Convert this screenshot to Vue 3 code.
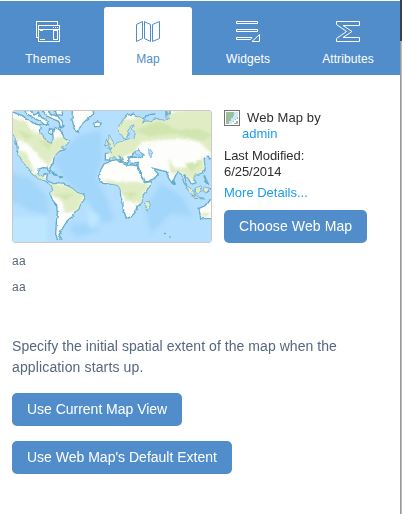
<script setup>
const actions = ['Use Current Map View', "Use Web Map's Default Extent"]
</script>

<template>
  <div class="screen">
    <main class="panel">
      <nav class="tabs">
        <div class="tab">
          <svg width="24" height="22" viewBox="0 0 24 22" fill="none" stroke="currentColor" shape-rendering="crispEdges">
            <path d="M2 16.5H.5V.5h21V4M2.5 4.5h21v16h-21zM3 8.5h20M17 6.5h1M19 6.5h1M21 6.5h1M17.5 9.5h4v9h-4zM4 9.5h3M4 18.5h5" />
          </svg>
          <span class="themes">Themes</span>
        </div>
        <div class="tab active">
          <svg width="24" height="22" viewBox="0 0 24 22" fill="none" stroke="currentColor">
            <path d="M.5 3.5l6-3v17l-6 3zM8.5.5l6 3v17l-6-3zM16.5 3.5l7-3v17l-7 3z" />
          </svg>
          <span>Map</span>
        </div>
        <div class="tab">
          <svg width="24" height="22" viewBox="0 0 24 22" fill="none" stroke="currentColor">
            <path d="M.5.5h21v2H.5zM.5 8.5h21v2H.5zM16 16.5H.5v2h14zM16 20.5l7.5-7v7z" />
          </svg>
          <span>Widgets</span>
        </div>
        <div class="tab">
          <svg width="24" height="22" viewBox="0 0 24 22" fill="none" stroke="currentColor">
            <path d="M.5.5h23v4H7l9 6-9 6h16.5v4H.5v-3l10-7-10-7z" />
          </svg>
          <span>Attributes</span>
        </div>
      </nav>

      <section class="summary">
        <div class="thumb">
          <svg width="198" height="131" viewBox="1 1 198 131">
            <defs>
              <filter id="coast" x="-5%" y="-5%" width="110%" height="110%">
                <feTurbulence type="fractalNoise" baseFrequency=".22" numOctaves="2" seed="4" result="n" />
                <feDisplacementMap in="SourceGraphic" in2="n" scale="3" xChannelSelector="R" yChannelSelector="G" />
                <feGaussianBlur stdDeviation=".45" />
              </filter>
              <filter id="soft" x="-20%" y="-20%" width="140%" height="140%"><feGaussianBlur stdDeviation="7" /></filter>
              <filter id="patch" x="-20%" y="-20%" width="140%" height="140%"><feGaussianBlur stdDeviation="3" /></filter>
              <clipPath id="westLand"><use href="#west" /></clipPath>
              <clipPath id="eastLand"><use href="#east" /></clipPath>
            </defs>
            <rect width="200" height="133" fill="#b4dffe" />
            <g transform="translate(-8 -10) scale(.33333)" filter="url(#soft)">
              <path class="deep" d="M150 180L220 110 290 90 295 170 275 235 310 300 330 360 290 370 250 300 180 235zM20 220L75 235 130 290 135 345 75 330 20 300zM190 380L240 370 290 390 220 410z" />
              <path class="deep" d="M425 325L470 250 535 290 565 350 500 340 440 400z" />
              <path class="pale" d="M20 350H130V430H20zM245 320L290 350 260 390z" />
            </g>
            <g filter="url(#coast)">
              <g transform="translate(-8 -10) scale(.33333)">
                <path id="west" class="land" d="M15 32L55 47 75 61 95 72 112 78 108 100 120 112 130 125 142 132 148 115 145 95 152 82 165 88 175 98 180 115 195 125 187 135 170 140 182 149 165 154 150 170 148 188 138 203 137 217 130 204 117 203 103 208 101 220 107 231 118 229 121 221 132 222 127 235 136 245 150 252 165 248 185 255 205 265 220 278 240 285 243 295 230 312 224 328 210 338 202 352 190 362 180 378 170 395 165 405 173 417 160 418 155 400 157 370 160 340 158 315 145 300 140 285 145 262 126 243 105 236 85 222 75 205 60 190 48 170 40 150 38 130 29 105 15 85zM205 28H267L269 42 255 53 237 69 230 78 222 97 210 85 204 60zM268 71L280 65 292 70 286 79 272 80zM62 32L75 46 91 55 109 64 120 73 133 74 125 58 113 53 103 39 90 45 79 32zM116 31L130 49 149 58 164 64 171 83 180 78 173 61 158 47 139 43 134 31zM153 30L173 32 177 46 158 44zM137 83L149 91 144 104 134 99zM142 215L164 227 149 224zM166 229L177 231 168 233z" />
                <g clip-path="url(#westLand)"><g filter="url(#patch)">
                  <path class="green" d="M10 50L65 62 80 90 120 110 150 115 175 110 195 130 170 150 145 175 135 200 105 170 82 142 52 121 25 120zM38 150L65 155 91 211 77 216 55 190zM75 220L115 223 128 244 100 245zM140 250L195 260 240 286 222 330 186 340 173 304 142 285z" />
                  <path class="rich" d="M40 90L90 105 65 120zM102 119L145 129 136 153zM150 282L210 280 190 300z" />
                </g></g>
              </g>
              <g transform="translate(96 -10) scale(.33333)">
                <path id="east" class="land" d="M0 187L10 182 35 178 40 188 55 195 75 195 90 198 98 220 110 248 130 245 125 260 105 285 102 308 88 320 83 335 70 350 55 355 45 325 45 308 38 290 37 268 30 255 10 252 -15 250 -27 235 -22 210 -12 192zM-8 180L-8 160 12 160 8 150 16 140 27 130 42 124 57 119 80 115 83 98 74 86 79 73 66 78 61 95 57 112 49 117 42 104 32 99 33 82 45 60 58 45 75 42 95 51 110 60 101 72 117 63 130 67 141 54 151 58 171 62 183 57 175 40 187 43 186 28H320V172L304 177 302 169 294 169 288 177 292 205 281 220 261 224 256 233 264 248 250 252 241 236 229 226 235 253 240 265 228 248 222 224 210 216 203 226 193 250 182 235 175 215 153 210 135 205 151 222 138 237 108 246 98 223 89 205 91 187 70 190 60 179 73 171 100 173 107 163 91 150 77 157 72 169 60 171 58 190 49 187 41 170 30 165 43 185 34 186 19 169 9 171 4 179zM3 105L15 127 20 142 2 143 9 134 0 125 4 116zM-5 121L0 132 -9 139zM123 305L126 315 117 330 112 322 113 311zM304 301L315 298V355L278 356 273 325 291 317zM235 257L249 268 261 283 253 283 238 267zM264 265L279 258 281 272 270 281 260 273zM252 287L277 290 286 296 261 294zM288 223L294 238 302 254 293 247zM289 262L306 266 294 279 287 271zM174 30L183 55 174 52zM198 244L202 252 197 255z" />
                <g clip-path="url(#eastLand)"><g filter="url(#patch)">
                  <path class="green" d="M-20 100L40 50 70 60 100 45 160 60 200 34 315 25V165L275 127 230 116 160 120 100 125 80 157 20 180 -15 150zM-25 235L25 246 85 245 127 254 103 283 101 309 53 302 37 270zM180 174L201 204 245 202 285 172 288 205 261 248 220 218 189 221zM230 253L303 258 290 295 250 290zM111 300H130V332H111zM280 340L306 338 300 352H280z" />
                  <path class="rich" d="M80 91L150 64 215 91 275 86 310 106 285 123 200 101 120 109zM42 278H90L70 295zM230 190L285 185 250 217z" />
                </g></g>
                <path class="lake" d="M82 154Q92 146 105 162Q92 170 82 162zM122 149L132 154 129 174 124 165z" />
                <path class="islands" d="M105 57L112 50 127 43 142 42M168 399L174 402M184 410L188 412" />
              </g>
            </g>
          </svg>
        </div>

        <div class="details">
          <p class="title">
            <svg class="missing" width="16" height="16" viewBox="0 0 16 16" shape-rendering="crispEdges">
              <path fill="#747474" d="M0 0h16v16H0z" />
              <path fill="#fff" d="M1 1h14v14H1z" />
              <path fill="#99bf9b" d="M2 2h12v12H2z" />
              <path fill="#d0e7fb" d="M10 2h4v5h-1v2h-2v2H9v2H8v1H5v-3h2V8h2V6h1z" />
              <path fill="#fff" d="M12 9h2v2h-2v2h-2v1H8v-2h2v-2h2z" />
            </svg>
            <span>Web Map by</span>
          </p>
          <a class="owner">admin</a>
          <p class="modified">Last Modified:<br>6/25/2014</p>
          <a class="more">More Details...</a>
          <button class="btn choose">Choose Web Map</button>
        </div>
      </section>

      <p class="note">aa</p>
      <p class="note">aa</p>
      <p class="hint">Specify the initial spatial extent of the map when the<br><span>application starts up.</span></p>
      <div class="actions">
        <button v-for="(label, i) in actions" :key="label" class="btn" :class="i ? 'default-extent' : 'current'">{{ label }}</button>
      </div>
    </main>
    <aside class="edge"><div class="edge-dark"></div><div class="edge-light"></div></aside>
  </div>
</template>

<style>
body { margin: 0; background: #fff; }
</style>

<style scoped>
.screen { width: 402px; height: 514px; display: flex; overflow: hidden; background: #fff; font-family: "Liberation Sans", Arial, sans-serif; }
.panel { width: 400px; padding-top: 1px; box-sizing: border-box; }
.tabs { height: 74px; box-sizing: border-box; padding: 6px 8px 0 4px; display: flex; gap: 12px; background: #508dca; }
.tab { width: 88px; height: 68px; display: flex; flex-direction: column; align-items: center; padding-top: 14px; box-sizing: border-box; color: #fff; font-size: 12px; letter-spacing: .1px; }
.tab svg { display: block; }
.tab span { line-height: 16px; margin-top: 8px; }
.tab .themes { letter-spacing: .4px; }
.active { background: #fff; color: #508dca; border-radius: 3px 3px 0 0; }
.summary { display: flex; gap: 12px; padding: 35px 12px 0; height: 168px; box-sizing: border-box; }
.thumb { width: 200px; height: 133px; box-sizing: border-box; border: 1px solid #c9c9c9; border-radius: 3px; overflow: hidden; flex: none; }
.thumb svg { display: block; }
.land { fill: #fdfdfb; stroke: #66abc9; stroke-width: 4; }
.green { fill: #e0edc4; }
.rich { fill: #d2e5b0; }
.deep { fill: #91cdf8; opacity: .5; }
.pale { fill: #bee7ff; }
.lake { fill: #b6e0fe; stroke: #66abc9; stroke-width: 2; }
.islands { fill: none; stroke: #66abc9; stroke-width: 4; }
.details { display: flex; flex-direction: column; align-items: flex-start; font-size: 13px; line-height: 16px; color: #2e2e2e; }
p { margin: 0; }
.title { display: flex; gap: 7px; letter-spacing: .1px; }
.owner { margin-left: 18px; color: #1a9cef; }
.modified { margin-top: 6px; letter-spacing: -.05px; }
.more { margin-top: 5px; color: #1a9cef; }
.btn { display: block; height: 33px; border: 0; border-radius: 5px; padding: 0 0 0 15px; text-align: left; background: #508dca; color: #fff; font: 14px/33px "Liberation Sans", Arial, sans-serif; white-space: nowrap; }
.choose { width: 143px; margin-top: 9px; letter-spacing: .1px; }
.note { padding-left: 12px; height: 26px; line-height: 16px; padding-top: 10px; box-sizing: border-box; font-size: 12px; letter-spacing: .3px; color: #57677f; }
.hint { margin: 41px 0 0 12px; font-size: 14px; line-height: 21px; letter-spacing: .05px; color: #57677f; white-space: nowrap; }
.hint span { letter-spacing: .14px; }
.actions { margin: 15px 0 0 12px; display: flex; flex-direction: column; gap: 15px; }
.current { width: 170px; letter-spacing: -.02px; }
.default-extent { width: 220px; letter-spacing: 0; }
.edge { width: 2px; display: flex; flex-direction: column; }
.edge-dark { height: 41px; background: #3c4148; }
.edge-light { flex: 1; background: linear-gradient(90deg, #999 50%, #bbb 50%); }
</style>
